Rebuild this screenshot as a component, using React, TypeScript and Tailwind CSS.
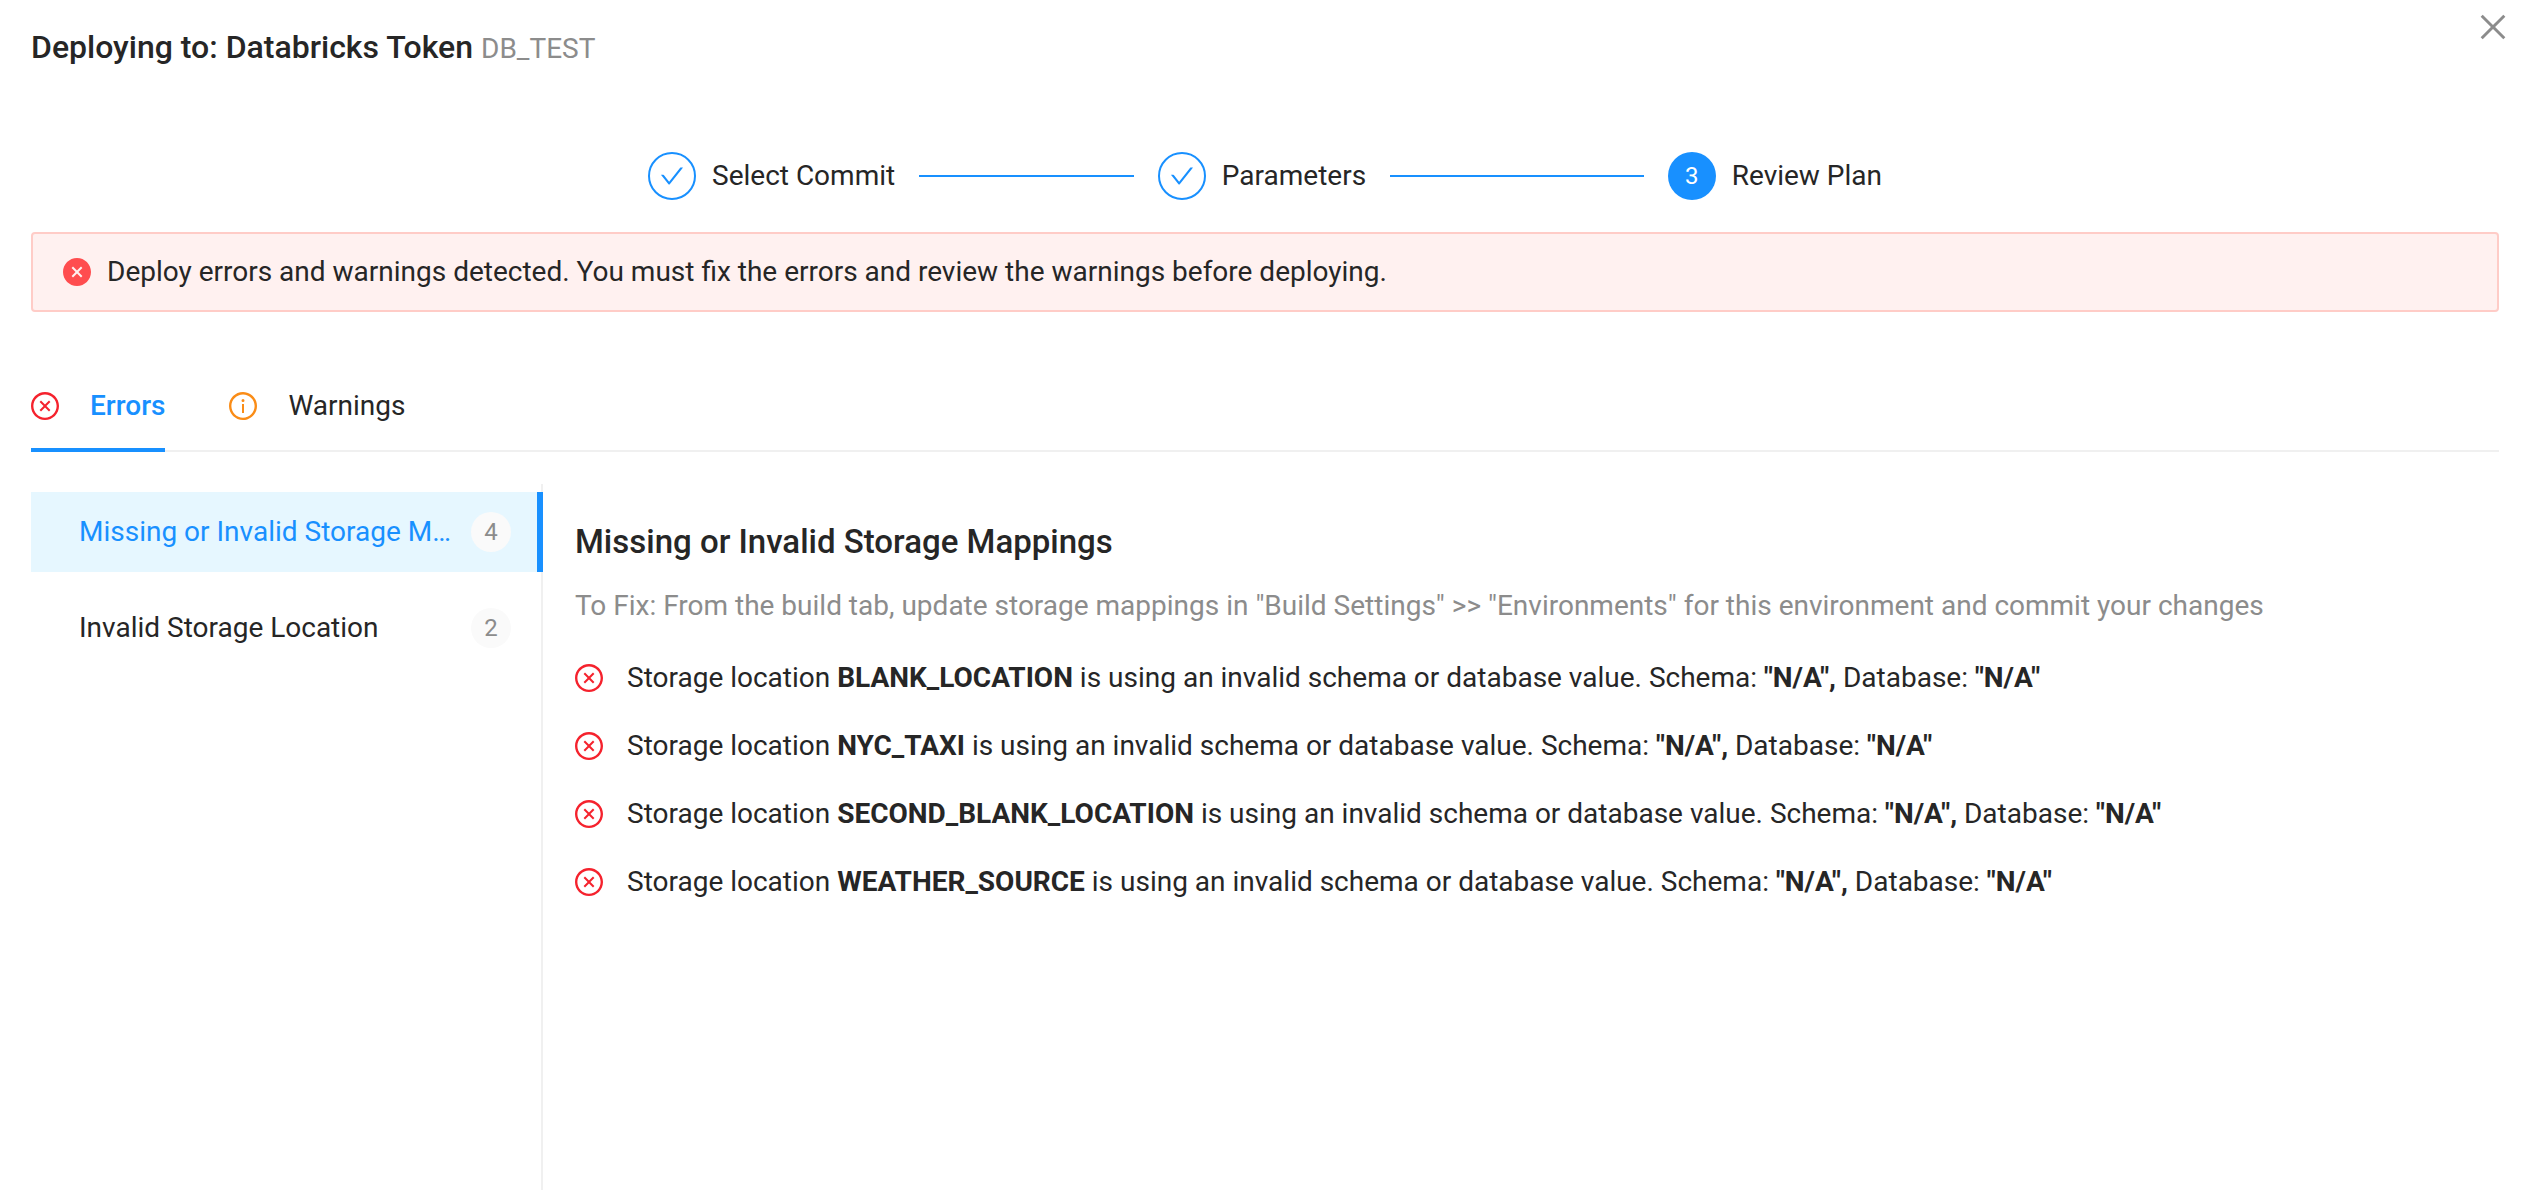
import { useState } from "react";
import {
  AiFillCloseCircle,
  AiOutlineCheck,
  AiOutlineClose,
  AiOutlineCloseCircle,
  AiOutlineInfoCircle,
} from "react-icons/ai";

const ICON_BOX = "64 64 896 896";

const steps = [
  { title: "Select Commit", done: true },
  { title: "Parameters", done: true },
  { title: "Review Plan", done: false },
];

const groups = [
  { title: "Missing or Invalid Storage Mappings", count: 4 },
  { title: "Invalid Storage Location", count: 2 },
];

const locations = ["BLANK_LOCATION", "NYC_TAXI", "SECOND_BLANK_LOCATION", "WEATHER_SOURCE"];

function Header() {
  return (
    <header className="flex items-start justify-between pt-[11px] pr-[31px] pl-[31px]">
      <h1 className="mt-[14px] text-[32px] leading-[44px] font-medium">
        Deploying to: Databricks Token{" "}
        <span className="text-[28px] leading-none font-normal text-[#8c8c8c]">DB_TEST</span>
      </h1>
      <button type="button" aria-label="Close" className="text-[#8c8c8c]">
        <AiOutlineClose viewBox={ICON_BOX} className="size-8" />
      </button>
    </header>
  );
}

function Steps() {
  return (
    <ol className="mx-auto flex w-1/2 items-center gap-6">
      {steps.map((step, i) => (
        <li
          key={step.title}
          className={i < steps.length - 1 ? "flex flex-1 items-center" : "flex items-center"}
        >
          {step.done ? (
            <span className="flex size-12 shrink-0 items-center justify-center rounded-full border-2 border-[#1890ff] text-[#1890ff]">
              <AiOutlineCheck viewBox={ICON_BOX} className="size-6" />
            </span>
          ) : (
            <span className="flex size-12 shrink-0 items-center justify-center rounded-full bg-[#1890ff] text-2xl text-white">
              {i + 1}
            </span>
          )}
          <span className="ml-4 whitespace-nowrap">{step.title}</span>
          {i < steps.length - 1 && <span className="ml-6 h-0.5 flex-1 bg-[#1890ff]" />}
        </li>
      ))}
    </ol>
  );
}

function Tabs() {
  return (
    <div role="tablist" className="mt-12 flex gap-16 shadow-[inset_0_-2px_0_#f0f0f0]">
      <button
        type="button"
        role="tab"
        aria-selected="true"
        className="flex items-center gap-[31px] border-b-4 border-[#1890ff] pt-6 pb-5 font-medium text-[#1890ff]"
      >
        <AiOutlineCloseCircle viewBox={ICON_BOX} className="size-7 text-[#f5222d]" />
        Errors
      </button>
      <button
        type="button"
        role="tab"
        aria-selected="false"
        className="flex items-center gap-[31px] border-b-4 border-transparent pt-6 pb-5"
      >
        <AiOutlineInfoCircle viewBox={ICON_BOX} className="size-7 text-[#fa8c16]" />
        Warnings
      </button>
    </div>
  );
}

function Sidebar({ active, onSelect }: { active: number; onSelect: (i: number) => void }) {
  return (
    <nav className="flex w-[512px] shrink-0 flex-col gap-4 pt-2 shadow-[inset_-2px_0_0_#f0f0f0]">
      {groups.map((group, i) => (
        <button
          key={group.title}
          type="button"
          onClick={() => onSelect(i)}
          className={
            i === active
              ? "flex h-20 items-center gap-4 border-r-6 border-[#1890ff] bg-[#e6f7ff] pr-[26px] pl-12 text-left text-[#1890ff]"
              : "flex h-20 items-center gap-4 pr-8 pl-12 text-left"
          }
        >
          <span className="flex-1 truncate">{group.title}</span>
          <span className="flex size-10 shrink-0 items-center justify-center rounded-full bg-[#fafafa] text-2xl text-[#8c8c8c]">
            {group.count}
          </span>
        </button>
      ))}
    </nav>
  );
}

function Details() {
  return (
    <section className="min-w-0 flex-1 pt-9 pl-8">
      <h2 className="text-[33px] leading-[44px] font-medium">Missing or Invalid Storage Mappings</h2>
      <p className="mt-5 text-[#8c8c8c]">
        To Fix: From the build tab, update storage mappings in "Build Settings" &gt;&gt;
        "Environments" for this environment and commit your changes
      </p>
      <ul className="mt-7 flex flex-col gap-6">
        {locations.map((name) => (
          <li key={name} className="flex items-center gap-6">
            <AiOutlineCloseCircle viewBox={ICON_BOX} className="size-7 shrink-0 text-[#f5222d]" />
            <span>
              Storage location <b className="font-bold">{name}</b> is using an invalid schema or
              database value. Schema: <b className="font-bold">"N/A",</b> Database:{" "}
              <b className="font-bold">"N/A"</b>
            </span>
          </li>
        ))}
      </ul>
    </section>
  );
}

export default function App() {
  const [active, setActive] = useState(0);
  return (
    <div className="flex min-h-screen flex-col bg-white font-[Roboto,sans-serif] text-[28px] leading-[44px] text-[#262626]">
      <Header />
      <main className="mt-[83px] flex flex-1 flex-col pr-[41px] pl-[31px]">
        <Steps />
        <div
          role="alert"
          className="mt-8 flex items-center gap-4 rounded border-2 border-[#ffccc7] bg-[#fff1f0] px-[30px] py-4"
        >
          <AiFillCloseCircle viewBox={ICON_BOX} className="size-7 shrink-0 text-[#ff4d4f]" />
          Deploy errors and warnings detected. You must fix the errors and review the warnings
          before deploying.
        </div>
        <Tabs />
        <div className="mt-8 flex flex-1">
          <Sidebar active={active} onSelect={setActive} />
          <Details />
        </div>
      </main>
    </div>
  );
}
